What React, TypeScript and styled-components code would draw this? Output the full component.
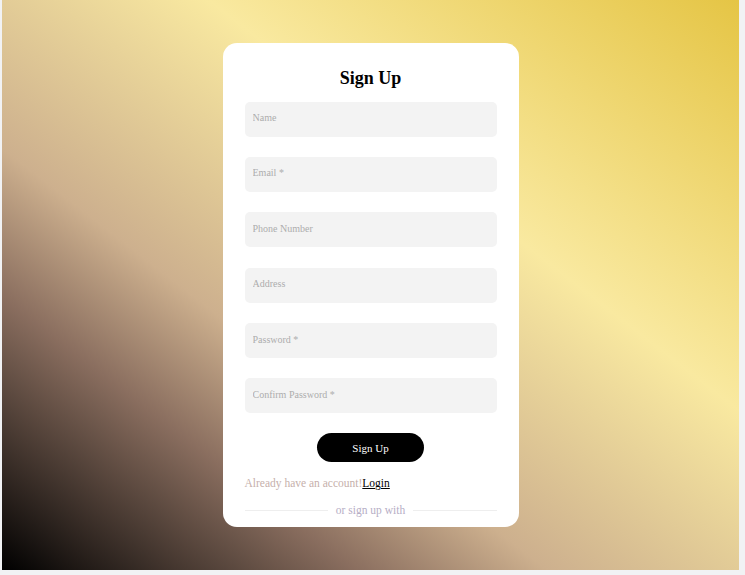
import * as React from 'react';
import styled, { createGlobalStyle } from 'styled-components';

const SERIF = '"Liberation Serif", "Times New Roman", serif';

const GlobalStyle = createGlobalStyle`
	html,
	body {
		margin: 0;
		padding: 0;
		background: #f1f2f4;
		font-family: ${SERIF};
	}
`;

const Page = styled.main`
	display: flex;
	align-items: center;
	justify-content: center;

	width: 737px;
	height: 570px;
	margin-left: 2px;

	background: linear-gradient(
		to top right,
		#000000 0%,
		#8a6e5f 24%,
		#cdb08e 37%,
		#f9e9a0 64%,
		#e5c545 100%
	);
`;

const Card = styled.section`
	display: flex;
	flex-direction: column;

	width: 296px;
	box-sizing: border-box;
	padding: 24px 22px 10px;

	background: #ffffff;
	border-radius: 14px;
`;

const Title = styled.h1`
	margin: 0 0 12px;

	font-family: ${SERIF};
	font-size: 18px;
	line-height: 23px;
	font-weight: bold;
	text-align: center;
	color: #000000;
`;

const Form = styled.form`
	display: flex;
	flex-direction: column;
	gap: 20.4px;
`;

const Input = styled.input`
	height: 35px;
	box-sizing: border-box;
	padding: 0 8px 3px;

	border: none;
	border-radius: 5px;
	background: #f3f3f3;
	outline: none;

	font-family: ${SERIF};
	font-size: 10px;
	color: #333333;

	&::placeholder {
		color: #adadad;
	}
`;

const SubmitButton = styled.button`
	align-self: center;

	width: 107px;
	height: 29px;
	margin-top: 20px;

	border: none;
	border-radius: 15px;
	background: #000000;

	font-family: ${SERIF};
	font-size: 11px;
	color: #ffffff;
	cursor: pointer;
`;

const LoginText = styled.p`
	margin: 14px 0 0;

	font-family: ${SERIF};
	font-size: 11.5px;
	line-height: 14px;
	color: #c6b0ab;
`;

const LoginLink = styled.a`
	color: #000000;
	text-decoration: underline;
`;

const Divider = styled.div`
	display: flex;
	align-items: center;
	gap: 8px;
	margin-top: 13px;

	font-family: ${SERIF};
	font-size: 11.5px;
	line-height: 14px;
	color: #b6aec6;

	&::before,
	&::after {
		content: '';
		flex: 1;
		height: 1px;
		background: #eeeeee;
	}
`;

const fields = ['Name', 'Email *', 'Phone Number', 'Address', 'Password *', 'Confirm Password *'];

const App: React.FC = () => (
	<>
		<GlobalStyle />
		<Page>
			<Card>
				<Title>Sign Up</Title>
				<Form onSubmit={(e) => e.preventDefault()}>
					{fields.map((field) => (
						<Input
							key={field}
							placeholder={field}
							type={field.startsWith('Password') || field.startsWith('Confirm') ? 'password' : 'text'}
						/>
					))}
				</Form>
				<SubmitButton type='button'>Sign Up</SubmitButton>
				<LoginText>
					Already have an account!<LoginLink href='#'>Login</LoginLink>
				</LoginText>
				<Divider>or sign up with</Divider>
			</Card>
		</Page>
	</>
);

export default App;
